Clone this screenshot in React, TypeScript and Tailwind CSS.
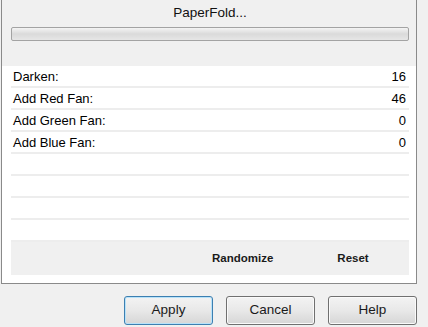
const rows = [
  { label: 'Darken:', value: '16' },
  { label: 'Add Red Fan:', value: '46' },
  { label: 'Add Green Fan:', value: '0' },
  { label: 'Add Blue Fan:', value: '0' },
  { label: '', value: '' },
  { label: '', value: '' },
  { label: '', value: '' },
  { label: '', value: '' },
];

function DialogButton({ children, primary }: { children: string; primary?: boolean }) {
  return (
    <button
      className={`w-[89px] h-[29px] rounded-[3px] border bg-gradient-to-b from-[#f3f3f3] via-[#e8e8e8] to-[#d6d6d6] text-[13.5px] text-[#1a1a1a] ${
        primary ? 'border-[#3c7fb1] shadow-[inset_0_0_0_1px_#b8e2f9]' : 'border-[#707070] shadow-[inset_0_0_0_1px_#fafafa]'
      }`}
    >
      {children}
    </button>
  );
}

export default function App() {
  return (
    <div className="w-[428px] h-[327px] bg-[#f0f0f0] font-['Liberation_Sans',Arial,sans-serif] text-black overflow-hidden">
      <div className="ml-[1px] w-[416px] h-[284px] border-l border-r border-b border-[#8a8a8a] bg-white flex flex-col">
        <div className="h-[66px] bg-[#f0f0f0] pl-[9px] pr-[7px] flex flex-col">
          <div className="h-[27px] flex items-center justify-center text-[13.5px] text-[#111]">PaperFold...</div>
          <div className="h-[14px] rounded-[2px] border border-[#a3a3a3] bg-gradient-to-b from-[#f4f4f4] via-[#dadada] to-[#e6e6e6]" />
        </div>
        <div className="pl-[9px] pr-[7px] flex flex-col">
          {rows.map((r, i) => (
            <div
              key={i}
              className="h-[22px] border-b-2 border-[#ededed] flex items-center justify-between pl-[2px] pr-[3px] pt-[1px] text-[13px]"
            >
              <span>{r.label}</span>
              <span>{r.value}</span>
            </div>
          ))}
          <div className="h-[33px] bg-[#f0f0f0] flex items-center text-[11.5px] font-bold text-[#1a1a1a]">
            <span className="ml-[201px]">Randomize</span>
            <span className="ml-[64px]">Reset</span>
          </div>
        </div>
      </div>
      <div className="flex justify-end gap-[13px] pr-[11px] pt-[12px]">
        <DialogButton primary>Apply</DialogButton>
        <DialogButton>Cancel</DialogButton>
        <DialogButton>Help</DialogButton>
      </div>
    </div>
  );
}
